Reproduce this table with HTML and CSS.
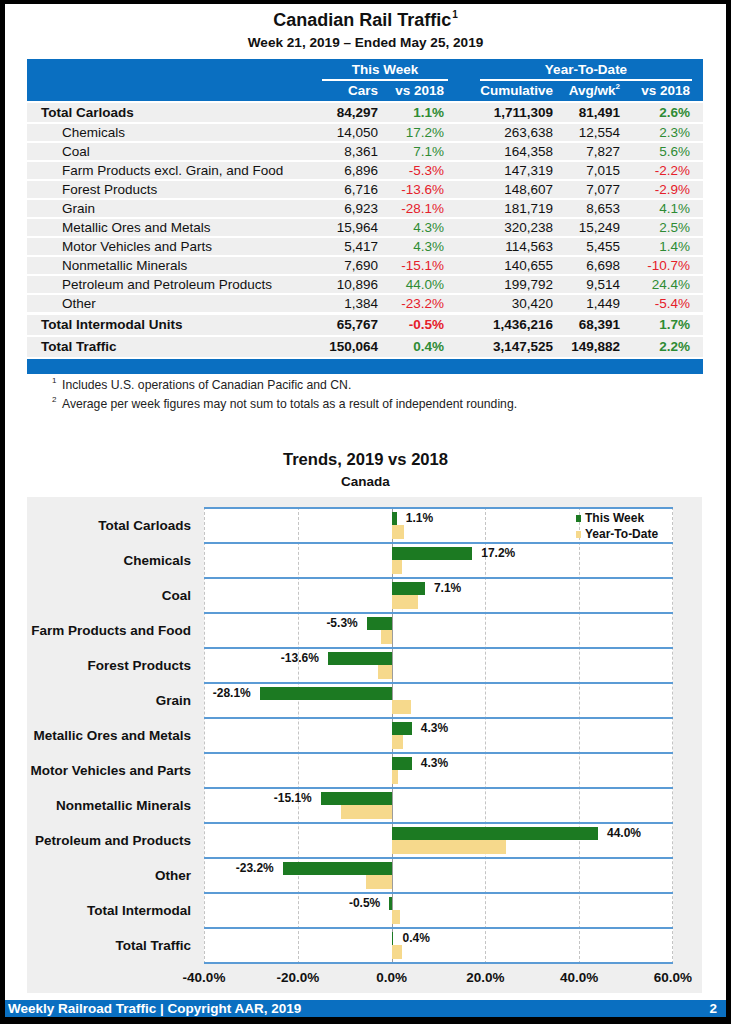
FILE: index.html
```html
<!DOCTYPE html>
<html lang="en">
<head>
<meta charset="utf-8">
<title>Canadian Rail Traffic</title>
<link rel="stylesheet" href="styles.css">
</head>
<body>
<div class="page">
  <header class="head">
    <h1 class="title">Canadian Rail Traffic<sup>1</sup></h1>
    <p class="subtitle">Week 21, 2019 – Ended May 25, 2019</p>
  </header>

  <section class="table">
    <div class="thead">
      <div class="grid hrow1">
        <span class="grp grp-week">This Week</span>
        <span class="grp grp-ytd">Year-To-Date</span>
      </div>
      <div class="grid hrow2">
        <span></span><span class="num">Cars</span><span class="num">vs 2018</span><span class="num">Cumulative</span><span class="num">Avg/wk<sup>2</sup></span><span class="num">vs 2018</span>
      </div>
    </div>

    <div class="grid row total first"><span class="lbl">Total Carloads</span><span class="num">84,297</span><span class="num pos">1.1%</span><span class="num">1,711,309</span><span class="num">81,491</span><span class="num pos">2.6%</span></div>
    <div class="grid row sub"><span class="lbl">Chemicals</span><span class="num">14,050</span><span class="num pos">17.2%</span><span class="num">263,638</span><span class="num">12,554</span><span class="num pos">2.3%</span></div>
    <div class="grid row sub"><span class="lbl">Coal</span><span class="num">8,361</span><span class="num pos">7.1%</span><span class="num">164,358</span><span class="num">7,827</span><span class="num pos">5.6%</span></div>
    <div class="grid row sub"><span class="lbl">Farm Products excl. Grain, and Food</span><span class="num">6,896</span><span class="num neg">-5.3%</span><span class="num">147,319</span><span class="num">7,015</span><span class="num neg">-2.2%</span></div>
    <div class="grid row sub"><span class="lbl">Forest Products</span><span class="num">6,716</span><span class="num neg">-13.6%</span><span class="num">148,607</span><span class="num">7,077</span><span class="num neg">-2.9%</span></div>
    <div class="grid row sub"><span class="lbl">Grain</span><span class="num">6,923</span><span class="num neg">-28.1%</span><span class="num">181,719</span><span class="num">8,653</span><span class="num pos">4.1%</span></div>
    <div class="grid row sub"><span class="lbl">Metallic Ores and Metals</span><span class="num">15,964</span><span class="num pos">4.3%</span><span class="num">320,238</span><span class="num">15,249</span><span class="num pos">2.5%</span></div>
    <div class="grid row sub"><span class="lbl">Motor Vehicles and Parts</span><span class="num">5,417</span><span class="num pos">4.3%</span><span class="num">114,563</span><span class="num">5,455</span><span class="num pos">1.4%</span></div>
    <div class="grid row sub"><span class="lbl">Nonmetallic Minerals</span><span class="num">7,690</span><span class="num neg">-15.1%</span><span class="num">140,655</span><span class="num">6,698</span><span class="num neg">-10.7%</span></div>
    <div class="grid row sub"><span class="lbl">Petroleum and Petroleum Products</span><span class="num">10,896</span><span class="num pos">44.0%</span><span class="num">199,792</span><span class="num">9,514</span><span class="num pos">24.4%</span></div>
    <div class="grid row sub"><span class="lbl">Other</span><span class="num">1,384</span><span class="num neg">-23.2%</span><span class="num">30,420</span><span class="num">1,449</span><span class="num neg">-5.4%</span></div>
    <div class="grid row total big gap3"><span class="lbl">Total Intermodal Units</span><span class="num">65,767</span><span class="num neg">-0.5%</span><span class="num">1,436,216</span><span class="num">68,391</span><span class="num pos">1.7%</span></div>
    <div class="grid row total big"><span class="lbl">Total Traffic</span><span class="num">150,064</span><span class="num pos">0.4%</span><span class="num">3,147,525</span><span class="num">149,882</span><span class="num pos">2.2%</span></div>
    <div class="tfoot"></div>
  </section>

  <section class="notes">
    <p class="note"><sup>1</sup>Includes U.S. operations of Canadian Pacific and CN.</p>
    <p class="note"><sup>2</sup>Average per week figures may not sum to totals as a result of independent rounding.</p>
  </section>

  <h2 class="chart-title">Trends, 2019 vs 2018</h2>
  <p class="chart-sub">Canada</p>

  <section class="chart">
    <div class="chart-body">
      <div class="cats">
        <div class="cat">Total Carloads</div>
        <div class="cat">Chemicals</div>
        <div class="cat">Coal</div>
        <div class="cat">Farm Products and Food</div>
        <div class="cat">Forest Products</div>
        <div class="cat">Grain</div>
        <div class="cat">Metallic Ores and Metals</div>
        <div class="cat">Motor Vehicles and Parts</div>
        <div class="cat">Nonmetallic Minerals</div>
        <div class="cat">Petroleum and Products</div>
        <div class="cat">Other</div>
        <div class="cat">Total Intermodal</div>
        <div class="cat">Total Traffic</div>
      </div>
      <div class="plot">
        <span class="gl dash" style="left:0%"></span>
        <span class="gl dash" style="left:20%"></span>
        <span class="gl zero" style="left:40%"></span>
        <span class="gl dash" style="left:60%"></span>
        <span class="gl dash" style="left:80%"></span>
        <span class="gl dash edge"></span>

        <div class="legend">
          <div class="leg"><span class="sw sw-tw"></span>This Week</div>
          <div class="leg"><span class="sw sw-ytd"></span>Year-To-Date</div>
        </div>

        <div class="prow">
          <div class="bl"><span class="sp" style="width:40%"></span><span class="bar tw" style="width:1.1%"></span><span class="val">1.1%</span></div>
          <div class="yl"><span class="sp" style="width:40%"></span><span class="bar ytd" style="width:2.6%"></span></div>
        </div>
        <div class="prow">
          <div class="bl"><span class="sp" style="width:40%"></span><span class="bar tw" style="width:17.2%"></span><span class="val">17.2%</span></div>
          <div class="yl"><span class="sp" style="width:40%"></span><span class="bar ytd" style="width:2.3%"></span></div>
        </div>
        <div class="prow">
          <div class="bl"><span class="sp" style="width:40%"></span><span class="bar tw" style="width:7.1%"></span><span class="val">7.1%</span></div>
          <div class="yl"><span class="sp" style="width:40%"></span><span class="bar ytd" style="width:5.6%"></span></div>
        </div>
        <div class="prow">
          <div class="bl"><span class="sp nsp" style="width:34.7%"><span class="val">-5.3%</span></span><span class="bar tw" style="width:5.3%"></span></div>
          <div class="yl"><span class="sp" style="width:37.8%"></span><span class="bar ytd" style="width:2.2%"></span></div>
        </div>
        <div class="prow">
          <div class="bl"><span class="sp nsp" style="width:26.4%"><span class="val">-13.6%</span></span><span class="bar tw" style="width:13.6%"></span></div>
          <div class="yl"><span class="sp" style="width:37.1%"></span><span class="bar ytd" style="width:2.9%"></span></div>
        </div>
        <div class="prow">
          <div class="bl"><span class="sp nsp" style="width:11.9%"><span class="val">-28.1%</span></span><span class="bar tw" style="width:28.1%"></span></div>
          <div class="yl"><span class="sp" style="width:40%"></span><span class="bar ytd" style="width:4.1%"></span></div>
        </div>
        <div class="prow">
          <div class="bl"><span class="sp" style="width:40%"></span><span class="bar tw" style="width:4.3%"></span><span class="val">4.3%</span></div>
          <div class="yl"><span class="sp" style="width:40%"></span><span class="bar ytd" style="width:2.5%"></span></div>
        </div>
        <div class="prow">
          <div class="bl"><span class="sp" style="width:40%"></span><span class="bar tw" style="width:4.3%"></span><span class="val">4.3%</span></div>
          <div class="yl"><span class="sp" style="width:40%"></span><span class="bar ytd" style="width:1.4%"></span></div>
        </div>
        <div class="prow">
          <div class="bl"><span class="sp nsp" style="width:24.9%"><span class="val">-15.1%</span></span><span class="bar tw" style="width:15.1%"></span></div>
          <div class="yl"><span class="sp" style="width:29.3%"></span><span class="bar ytd" style="width:10.7%"></span></div>
        </div>
        <div class="prow">
          <div class="bl"><span class="sp" style="width:40%"></span><span class="bar tw" style="width:44%"></span><span class="val">44.0%</span></div>
          <div class="yl"><span class="sp" style="width:40%"></span><span class="bar ytd" style="width:24.4%"></span></div>
        </div>
        <div class="prow">
          <div class="bl"><span class="sp nsp" style="width:16.8%"><span class="val">-23.2%</span></span><span class="bar tw" style="width:23.2%"></span></div>
          <div class="yl"><span class="sp" style="width:34.6%"></span><span class="bar ytd" style="width:5.4%"></span></div>
        </div>
        <div class="prow">
          <div class="bl"><span class="sp nsp" style="width:39.5%"><span class="val">-0.5%</span></span><span class="bar tw" style="width:0.5%"></span></div>
          <div class="yl"><span class="sp" style="width:40%"></span><span class="bar ytd" style="width:1.7%"></span></div>
        </div>
        <div class="prow last">
          <div class="bl"><span class="sp" style="width:40%"></span><span class="bar tw" style="width:0.4%"></span><span class="val">0.4%</span></div>
          <div class="yl"><span class="sp" style="width:40%"></span><span class="bar ytd" style="width:2.2%"></span></div>
        </div>
      </div>
    </div>
    <div class="axis">
      <span class="tick">-40.0%</span>
      <span class="tick">-20.0%</span>
      <span class="tick">0.0%</span>
      <span class="tick">20.0%</span>
      <span class="tick">40.0%</span>
      <span class="tick">60.0%</span>
    </div>
  </section>

  <footer class="footer">
    <span>Weekly Railroad Traffic | Copyright AAR, 2019</span>
    <span>2</span>
  </footer>
</div>
</body>
</html>
```

FILE: styles.css
```css
* { box-sizing: border-box; }

html, body {
  margin: 0;
  padding: 0;
  background: #000;
}

body {
  font-family: "Liberation Sans", Arial, sans-serif;
  color: #111;
  padding: 4px 5px 7px 5px;
}

.page {
  width: 721px;
  min-height: 1013px;
  background: #fff;
  display: flex;
  flex-direction: column;
}

/* ---------- heading ---------- */
.head {
  display: flex;
  flex-direction: column;
  align-items: center;
  padding-top: 5px;
}

.title {
  margin: 0;
  font-size: 18px;
  line-height: 22px;
  font-weight: bold;
}

.title sup {
  font-size: 10px;
  vertical-align: 8px;
  line-height: 0;
  margin-left: 1px;
}

.subtitle {
  margin: 3px 0 0;
  font-size: 13.6px;
  line-height: 18px;
  font-weight: bold;
}

/* ---------- table ---------- */
.table {
  margin: 7px 0 0 22px;
  width: 676px;
  display: flex;
  flex-direction: column;
  font-size: 13.5px;
}

.grid {
  display: grid;
  grid-template-columns: 285px 66px 66px 109px 67px 70px;
  padding-right: 13px;
}

.thead {
  background: #0a6fc1;
  color: #fff;
  font-weight: bold;
  padding-top: 2px;
  height: 42px;
}

.hrow1 .grp {
  line-height: 18px;
  text-align: center;
  border-bottom: 2px solid #fff;
}

.grp-week {
  grid-column: 2 / 4;
  margin: 0 -4px 0 10px;
}

.grp-ytd {
  grid-column: 4 / 7;
  margin: 0 -2px 0 36px;
}

.hrow2 span {
  line-height: 20px;
}

.hrow2 sup {
  font-size: 8px;
  vertical-align: 6px;
  line-height: 0;
}

.num {
  text-align: right;
  white-space: nowrap;
}

.row {
  background: #efefef;
  height: 17px;
  line-height: 17px;
  margin-top: 2px;
}

.row.first {
  height: 19px;
  line-height: 19px;
}

.row.big {
  height: 20px;
  line-height: 20px;
}

.row.gap3 {
  margin-top: 3px;
}

.row.total {
  font-weight: bold;
}

.row .lbl {
  white-space: nowrap;
}

.row.total .lbl {
  padding-left: 14px;
}

.row.sub .lbl {
  padding-left: 35px;
}

.pos { color: #2e8b34; }
.neg { color: #e5202a; }

.tfoot {
  background: #0a6fc1;
  height: 15px;
  margin-top: 2px;
}

/* ---------- notes ---------- */
.notes {
  margin: 2px 0 0 47px;
}

.note {
  margin: 0;
  font-size: 12.2px;
  line-height: 19px;
  color: #222;
  display: flex;
}

.note sup {
  font-size: 8px;
  line-height: 0;
  width: 10px;
  flex-shrink: 0;
  margin-top: 5px;
}

/* ---------- chart ---------- */
.chart-title {
  margin: 36px 0 0;
  text-align: center;
  font-size: 16.6px;
  line-height: 20px;
  font-weight: bold;
}

.chart-sub {
  margin: 3px 0 0;
  text-align: center;
  font-size: 13.5px;
  line-height: 18px;
  font-weight: bold;
}

.chart {
  margin: 6px 0 0 22px;
  width: 675px;
  background: #efefef;
  padding: 10px 0 3px;
}

.chart-body {
  display: grid;
  grid-template-columns: 177px 469px 29px;
}

.cats {
  display: flex;
  flex-direction: column;
}

.cat {
  height: 35px;
  padding: 2px 13px 0 0;
  line-height: 33px;
  text-align: right;
  font-size: 13.5px;
  font-weight: bold;
  white-space: nowrap;
}

.plot {
  position: relative;
  z-index: 0;
  background: #fff;
}

.gl {
  position: absolute;
  top: 0;
  bottom: 0;
  width: 0;
  z-index: -1;
}

.gl.dash {
  border-left: 1px dashed #c4c4c4;
}

.gl.edge {
  right: 0;
}

.gl.zero {
  border-left: 1px solid #9c9c9c;
}

.prow {
  height: 35px;
  border-top: 2px solid #5b9bd5;
  padding-top: 3px;
}

.prow.last {
  height: 37px;
  border-bottom: 2px solid #5b9bd5;
}

.bl, .yl {
  display: flex;
  align-items: center;
}

.bl { height: 13px; }
.yl { height: 14px; }

.sp {
  flex-shrink: 0;
  height: 100%;
}

.nsp {
  display: flex;
  justify-content: flex-end;
  align-items: center;
  padding-right: 9px;
}

.bar {
  flex-shrink: 0;
  height: 100%;
}

.bar.tw { background: #1c7a22; }
.bar.ytd { background: #f6d98c; }

.val {
  font-size: 12px;
  font-weight: bold;
  line-height: 13px;
  white-space: nowrap;
  margin-left: 9px;
}

.nsp .val {
  margin-left: 0;
}

.legend {
  position: absolute;
  left: 372px;
  top: 3px;
  font-size: 12px;
  font-weight: bold;
}

.leg {
  display: flex;
  align-items: center;
  line-height: 16px;
  white-space: nowrap;
}

.sw {
  width: 5px;
  height: 7px;
  margin-right: 4px;
}

.sw-tw { background: #1c7a22; }
.sw-ytd { background: #f6d98c; }

.axis {
  margin-left: 177px;
  width: 469px;
  height: 26px;
  display: flex;
  justify-content: space-between;
  align-items: center;
}

.tick {
  width: 0;
  display: flex;
  justify-content: center;
  font-size: 13.5px;
  font-weight: bold;
  white-space: nowrap;
}

/* ---------- footer ---------- */
.footer {
  margin-top: auto;
  height: 17px;
  background: #0a6fc1;
  color: #fff;
  font-weight: bold;
  font-size: 13.5px;
  line-height: 17px;
  display: flex;
  justify-content: space-between;
  padding: 0 9px 0 3px;
}
```
